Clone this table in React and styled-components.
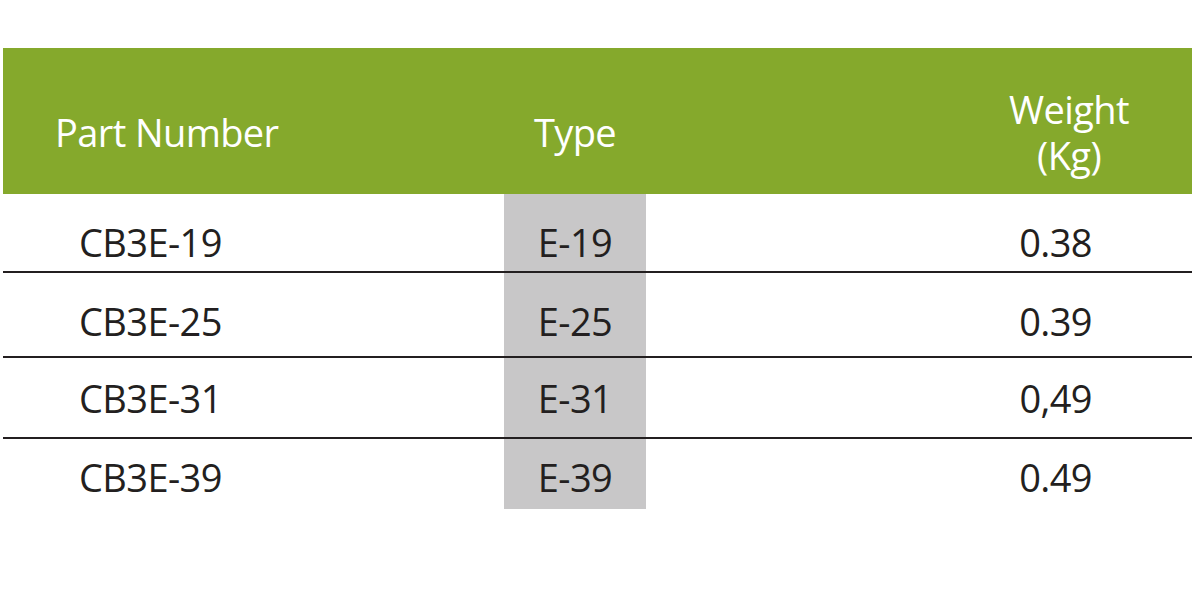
import React from 'react'
import styled, { createGlobalStyle } from 'styled-components'

const GlobalStyle = createGlobalStyle`
  html, body {
    margin: 0;
    padding: 0;
    background: #fff;
  }
  body {
    font-family: 'Open Sans', 'Noto Sans', sans-serif;
  }
`;

const Page = styled.div`
  width: 1200px;
  height: 600px;
  padding: 48px 8px 0 3px;
  box-sizing: border-box;
`;

const Table = styled.div`
  display: grid;
  grid-template-columns: 501px 142px 1fr;
  width: 1189px;
`;

const HeaderCell = styled.div`
  height: 146px;
  background: #85a92c;
  color: #fff;
  font-size: 38px;
  letter-spacing: -0.6px;
  line-height: 46px;
  display: flex;
  align-items: center;
  justify-content: ${p => p.$justify || 'flex-start'};
  text-align: center;
  padding: 22px ${p => p.$right || 0}px 0 ${p => p.$left || 0}px;
  box-sizing: border-box;
`;

const Cell = styled.div`
  height: ${p => p.$height}px;
  border-bottom: ${p => (p.$line ? '2px solid #231f20' : 'none')};
  background: ${p => (p.$shaded ? '#c8c7c8' : 'transparent')};
  color: #231f20;
  font-size: 38px;
  letter-spacing: -0.6px;
  line-height: 1;
  display: flex;
  align-items: flex-start;
  justify-content: ${p => p.$justify || 'flex-start'};
  padding: ${p => p.$top}px ${p => p.$right || 0}px 0 ${p => p.$left || 0}px;
  box-sizing: border-box;
`;

const rows = [
  { part: 'CB3E-19', type: 'E-19', weight: '0.38', height: 79, top: 29, line: true },
  { part: 'CB3E-25', type: 'E-25', weight: '0.39', height: 85, top: 29, line: true },
  { part: 'CB3E-31', type: 'E-31', weight: '0,49', height: 81, top: 21, line: true },
  { part: 'CB3E-39', type: 'E-39', weight: '0.49', height: 70, top: 19, line: false },
]

export default function App() {
  return (
    <Page>
      <GlobalStyle />
      <Table>
        <HeaderCell $left={52}>Part Number</HeaderCell>
        <HeaderCell $justify="center">Type</HeaderCell>
        <HeaderCell $justify="flex-end" $right={63}>
          Weight<br />(Kg)
        </HeaderCell>
        {rows.map(r => (
          <React.Fragment key={r.part}>
            <Cell $height={r.height} $top={r.top} $line={r.line} $left={76}>{r.part}</Cell>
            <Cell $height={r.height} $top={r.top} $line={r.line} $shaded $justify="center">{r.type}</Cell>
            <Cell $height={r.height} $top={r.top} $line={r.line} $justify="flex-end" $right={100}>{r.weight}</Cell>
          </React.Fragment>
        ))}
      </Table>
    </Page>
  )
}
